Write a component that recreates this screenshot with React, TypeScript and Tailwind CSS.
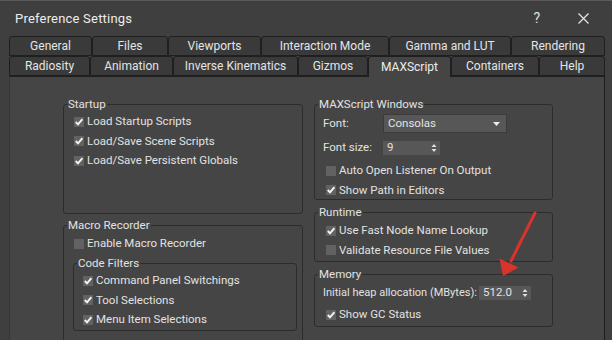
import React from "react";

type TabItem = { label: string; w: string; active?: boolean };

const rowOne: TabItem[] = [
  { label: "General", w: "w-[83px]" },
  { label: "Files", w: "w-[76px]" },
  { label: "Viewports", w: "w-[93px]" },
  { label: "Interaction Mode", w: "w-[128px]" },
  { label: "Gamma and LUT", w: "w-[122px]" },
  { label: "Rendering", w: "w-[94px]" },
];

const rowTwo: TabItem[] = [
  { label: "Radiosity", w: "w-[81px]" },
  { label: "Animation", w: "w-[83px]" },
  { label: "Inverse Kinematics", w: "w-[125px]" },
  { label: "Gizmos", w: "w-[70px]" },
  { label: "MAXScript", w: "w-[83px]", active: true },
  { label: "Containers", w: "w-[88px]" },
  { label: "Help", w: "w-[66px]" },
];

function Tab({ tab }: { tab: TabItem }) {
  if (tab.active) {
    return (
      <div
        className={`${tab.w} h-[21px] -mb-px relative z-10 flex items-center justify-center rounded-t-[3px] border border-b-0 border-[#1f1f1f] bg-[#454545] text-[12px] text-[#ececec]`}
      >
        {tab.label}
      </div>
    );
  }
  return (
    <div
      className={`${tab.w} h-[20px] flex items-center justify-center rounded-t-[3px] border border-[#1f1f1f] bg-[#3a3a3a] text-[12px] text-[#e4e4e4]`}
    >
      {tab.label}
    </div>
  );
}

function Check({ on }: { on: boolean }) {
  return (
    <span className="w-[10px] h-[10px] bg-[#626262] flex items-center justify-center shrink-0">
      {on && (
        <svg width="8" height="8" viewBox="0 0 8 8">
          <path d="M0.8 4 L3 6.4 L7.4 1.2" stroke="#f4f4f4" strokeWidth="1.9" fill="none" />
        </svg>
      )}
    </span>
  );
}

function CheckRow({ on, label, pad }: { on: boolean; label: string; pad: string }) {
  return (
    <div className={`h-[19.5px] flex items-center gap-[3px] whitespace-nowrap ${pad}`}>
      <Check on={on} />
      <span>{label}</span>
    </div>
  );
}

function Spinner({ value, w }: { value: string; w: string }) {
  return (
    <div className={`${w} h-[14px] bg-[#575757] flex items-center pl-[4px] pr-[3px] shrink-0`}>
      <span className="flex-1 leading-none">{value}</span>
      <svg width="6" height="10" viewBox="0 0 6 10">
        <path d="M0.5 4 L3 1 L5.5 4 Z M0.5 6 L3 9 L5.5 6 Z" fill="#e0e0e0" />
      </svg>
    </div>
  );
}

export default function App() {
  return (
    <div className="w-[612px] h-[340px] overflow-hidden relative bg-[#3f3f3f] font-['Roboto',sans-serif] text-[11.5px] text-[#e2e2e2] border-t border-[#5a5a5a]">
      {/* title bar */}
      <div className="h-[35px] flex items-center pl-[15px] pr-[23px]">
        <span className="text-[13px] text-[#ededed] tracking-[0.2px]">Preference Settings</span>
        <span className="ml-auto text-[14px] text-[#e0e0e0]">?</span>
        <svg className="ml-[38px]" width="11" height="11" viewBox="0 0 11 11">
          <path d="M0.5 0.5 L10.5 10.5 M10.5 0.5 L0.5 10.5" stroke="#e6e6e6" strokeWidth="1.2" />
        </svg>
      </div>

      {/* tabs */}
      <div className="pl-[9px]">
        <div className="flex">
          {rowOne.map((t) => (
            <Tab key={t.label} tab={t} />
          ))}
        </div>
        <div className="flex items-end">
          {rowTwo.map((t) => (
            <Tab key={t.label} tab={t} />
          ))}
        </div>
      </div>

      {/* pane */}
      <div className="ml-[9px] w-[596px] h-[270px] bg-[#454545] border-t border-l border-r border-t-[#1f1f1f] border-l-[#363636] border-r-[#1c1c1c] flex gap-[11px] pl-[53px] pt-[19px]">
        {/* left column */}
        <div className="w-[240px] flex flex-col">
          <fieldset className="shrink-0 h-[118px] border border-[#2c2c2c] rounded-[3px]">
            <legend className="ml-[3px] px-[1px] leading-[16px]">Startup</legend>
            <CheckRow on label="Load Startup Scripts" pad="pl-[10px]" />
            <CheckRow on label="Load/Save Scene Scripts" pad="pl-[10px]" />
            <CheckRow on label="Load/Save Persistent Globals" pad="pl-[10px]" />
          </fieldset>

          <fieldset className="shrink-0 mt-[3px] h-[160px] border border-[#2c2c2c] rounded-[3px]">
            <legend className="ml-[3px] px-[1px] leading-[16px]">Macro Recorder</legend>
            <div className="pt-[1px]">
              <CheckRow on={false} label="Enable Macro Recorder" pad="pl-[10px]" />
            </div>
            <fieldset className="mt-[1.5px] ml-[9px] mr-[5px] border border-[#2c2c2c] rounded-[3px]">
              <legend className="ml-[3px] px-[1px] leading-[16px]">Code Filters</legend>
              <CheckRow on label="Command Panel Switchings" pad="pl-[9px]" />
              <CheckRow on label="Tool Selections" pad="pl-[9px]" />
              <CheckRow on label="Menu Item Selections" pad="pl-[9px]" />
            </fieldset>
            <div className="mt-[5px] pl-[30px] leading-[16px]">Explicit scene object names</div>
          </fieldset>
        </div>

        {/* right column */}
        <div className="w-[239px] flex flex-col">
          <fieldset className="shrink-0 h-[104px] border border-[#2c2c2c] rounded-[3px]">
            <legend className="ml-[3px] px-[1px] leading-[16px]">MAXScript Windows</legend>
            <div className="mt-[2px] h-[19px] flex items-center pl-[8px]">
              <span className="w-[60px]">Font:</span>
              <div className="w-[124px] h-[19px] bg-[#575757] border border-[#3b3b3b] flex items-center pl-[4px] pr-[6px]">
                <span className="flex-1">Consolas</span>
                <svg width="7" height="4" viewBox="0 0 7 4">
                  <path d="M0 0 L7 0 L3.5 4 Z" fill="#ececec" />
                </svg>
              </div>
            </div>
            <div className="mt-[8px] h-[14px] flex items-center pl-[8px]">
              <span className="w-[60px]">Font size:</span>
              <Spinner value="9" w="w-[57px]" />
            </div>
            <div className="mt-[6px]">
              <CheckRow on={false} label="Auto Open Listener On Output" pad="pl-[11px]" />
              <CheckRow on label="Show Path in Editors" pad="pl-[11px]" />
            </div>
          </fieldset>

          <fieldset className="shrink-0 mt-[4px] h-[58px] border border-[#2c2c2c] rounded-[3px]">
            <legend className="ml-[3px] px-[1px] leading-[16px]">Runtime</legend>
            <div className="pt-[1px]">
              <CheckRow on label="Use Fast Node Name Lookup" pad="pl-[11px]" />
              <CheckRow on={false} label="Validate Resource File Values" pad="pl-[11px]" />
            </div>
          </fieldset>

          <fieldset className="shrink-0 mt-[4px] h-[61px] border border-[#2c2c2c] rounded-[3px]">
            <legend className="ml-[3px] px-[1px] leading-[16px]">Memory</legend>
            <div className="mt-[1px] h-[20px] flex items-center pl-[8px]">
              <span className="w-[156px] shrink-0 whitespace-nowrap text-[11px]">Initial heap allocation (MBytes):</span>
              <Spinner value="512.0" w="w-[52px]" />
            </div>
            <div className="mt-[2px]">
              <CheckRow on label="Show GC Status" pad="pl-[11px]" />
            </div>
          </fieldset>
        </div>
      </div>

      {/* red annotation arrow */}
      <svg className="absolute left-0 top-0 pointer-events-none" width="612" height="340" viewBox="0 0 612 340">
        <path d="M535 212 L511 260" stroke="#d9342b" strokeWidth="3" strokeLinecap="round" />
        <path d="M503 275 L499.5 257.5 L518.5 266.5 Z" fill="#d9342b" />
      </svg>
    </div>
  );
}
